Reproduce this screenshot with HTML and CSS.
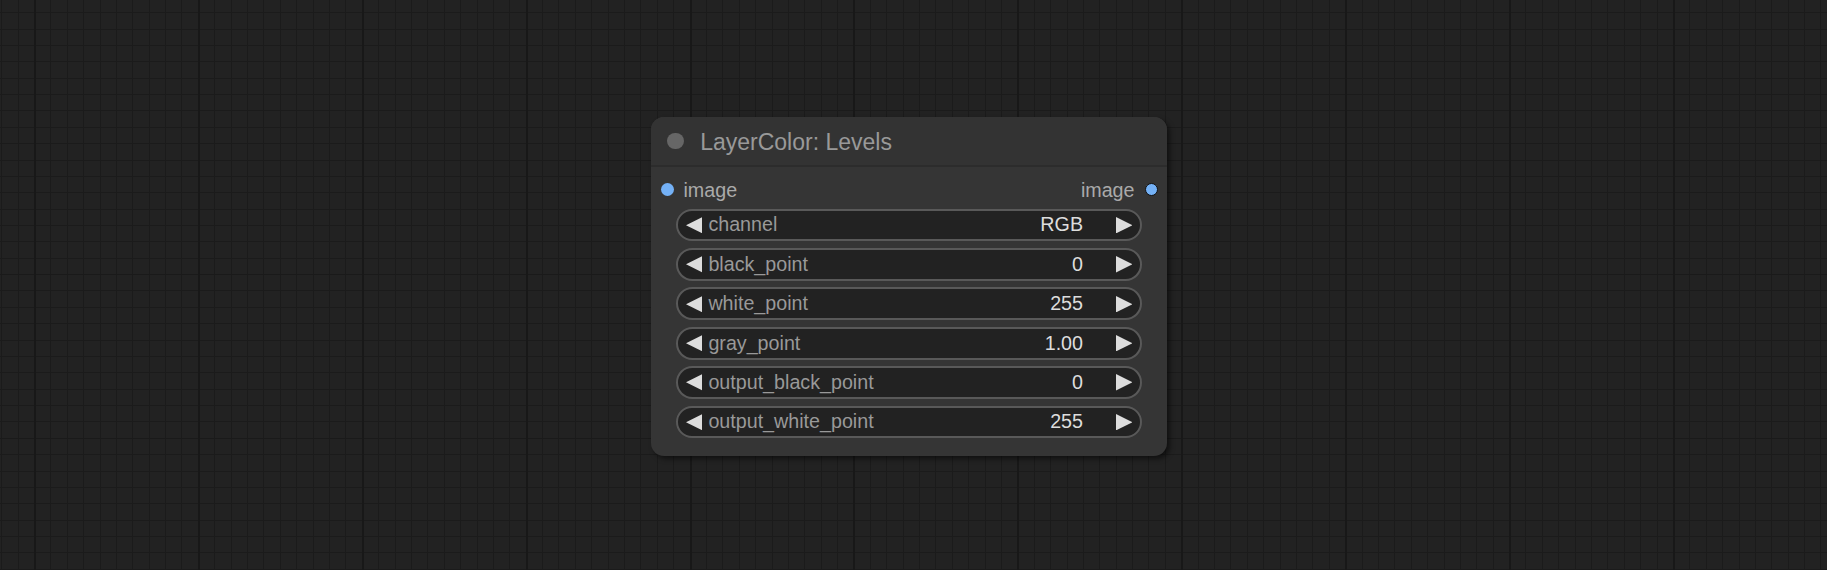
FILE: index.html
```html
<!DOCTYPE html>
<html>
<head>
<meta charset="utf-8">
<title>LayerColor: Levels</title>
<link rel="stylesheet" href="styles.css">
</head>
<body>
<div class="canvas">
  <div class="node">
    <div class="node-title">
      <span class="title-dot"></span>
      <span class="title-text">LayerColor: Levels</span>
    </div>
    <div class="title-sep"></div>
    <div class="node-body">
      <div class="slots">
        <div class="slot slot-in"><span class="slot-dot"></span><span class="slot-label">image</span></div>
        <div class="slot slot-out"><span class="slot-label">image</span><span class="slot-dot slot-dot-out"></span></div>
      </div>
      <div class="widgets">
        <div class="widget">
          <svg class="arrow" viewBox="0 0 10 10"><polygon points="10,0 0,5 10,10"/></svg>
          <span class="w-label">channel</span>
          <span class="w-value">RGB</span>
          <svg class="arrow" viewBox="0 0 10 10"><polygon points="0,0 10,5 0,10"/></svg>
        </div>
        <div class="widget">
          <svg class="arrow" viewBox="0 0 10 10"><polygon points="10,0 0,5 10,10"/></svg>
          <span class="w-label">black_point</span>
          <span class="w-value">0</span>
          <svg class="arrow" viewBox="0 0 10 10"><polygon points="0,0 10,5 0,10"/></svg>
        </div>
        <div class="widget">
          <svg class="arrow" viewBox="0 0 10 10"><polygon points="10,0 0,5 10,10"/></svg>
          <span class="w-label">white_point</span>
          <span class="w-value">255</span>
          <svg class="arrow" viewBox="0 0 10 10"><polygon points="0,0 10,5 0,10"/></svg>
        </div>
        <div class="widget">
          <svg class="arrow" viewBox="0 0 10 10"><polygon points="10,0 0,5 10,10"/></svg>
          <span class="w-label">gray_point</span>
          <span class="w-value">1.00</span>
          <svg class="arrow" viewBox="0 0 10 10"><polygon points="0,0 10,5 0,10"/></svg>
        </div>
        <div class="widget">
          <svg class="arrow" viewBox="0 0 10 10"><polygon points="10,0 0,5 10,10"/></svg>
          <span class="w-label">output_black_point</span>
          <span class="w-value">0</span>
          <svg class="arrow" viewBox="0 0 10 10"><polygon points="0,0 10,5 0,10"/></svg>
        </div>
        <div class="widget">
          <svg class="arrow" viewBox="0 0 10 10"><polygon points="10,0 0,5 10,10"/></svg>
          <span class="w-label">output_white_point</span>
          <span class="w-value">255</span>
          <svg class="arrow" viewBox="0 0 10 10"><polygon points="0,0 10,5 0,10"/></svg>
        </div>
      </div>
    </div>
  </div>
</div>
</body>
</html>
```
FILE: styles.css
```css
html, body {
  margin: 0;
  padding: 0;
}

body {
  width: 1827px;
  height: 570px;
  overflow: hidden;
  font-family: "Liberation Sans", Arial, sans-serif;
  background-color: #222222;
  background-image:
    repeating-linear-gradient(90deg, transparent 0 34px, #181818 34px 36px, transparent 36px 163.9px),
    repeating-linear-gradient(180deg, transparent 0 110.5px, #1a1a1a 110.5px 111.5px, transparent 111.5px 163.7px),
    repeating-linear-gradient(90deg, transparent 0 1.2px, #1b1b1b 1.2px 2.2px, transparent 2.2px 16.39px),
    repeating-linear-gradient(180deg, transparent 0 12.2px, #1b1b1b 12.2px 13.2px, transparent 13.2px 16.37px);
}

.canvas {
  position: relative;
  width: 1827px;
  height: 570px;
}

.node {
  position: absolute;
  left: 651px;
  top: 117px;
  width: 516px;
  height: 339px;
  background: #353535;
  border-radius: 13px;
  box-shadow: 3px 3px 5px rgba(0, 0, 0, 0.5);
  overflow: hidden;
  display: flex;
  flex-direction: column;
}

.node-title {
  height: 48px;
  background: #333333;
  display: flex;
  align-items: center;
  padding-left: 16.4px;
  gap: 16.4px;
}

.title-dot {
  width: 16.4px;
  height: 16.4px;
  border-radius: 50%;
  background: #666666;
  flex: none;
}

.title-text {
  font-size: 23px;
  color: #999999;
  padding-top: 3px;
}

.title-sep {
  height: 2px;
  background: #2c2c2c;
}

.node-body {
  display: flex;
  flex-direction: column;
  padding: 0 24.6px;
}

.slots {
  height: 33px;
  margin: 5.5px -24.6px 0;
  padding: 0 9.5px 0 9.6px;
  display: flex;
  align-items: center;
  justify-content: space-between;
}

.slot {
  display: flex;
  align-items: center;
}

.slot-in {
  gap: 9.9px;
}

.slot-out {
  gap: 10px;
}

.slot-dot {
  width: 13px;
  height: 13px;
  border-radius: 50%;
  background: #74b1f6;
  box-sizing: border-box;
  flex: none;
}

.slot-dot-out {
  border: 1.5px solid #111111;
}

.slot-label {
  font-size: 19.7px;
  color: #aaaaaa;
  padding-top: 3px;
}

.widgets {
  margin-top: 3.1px;
  display: flex;
  flex-direction: column;
  gap: 6.6px;
}

.widget {
  height: 32.8px;
  box-sizing: border-box;
  border: 2px solid #595959;
  border-radius: 16.4px;
  background: #222222;
  display: flex;
  align-items: center;
  padding: 0 8px;
  font-size: 19.7px;
}

.arrow {
  width: 16.4px;
  height: 16.4px;
  flex: none;
  fill: #dddddd;
}

.w-label {
  flex: 1;
  margin-left: 6.4px;
  color: #999999;
  white-space: nowrap;
}

.w-value {
  margin-right: 33px;
  color: #dddddd;
  white-space: nowrap;
}
```
